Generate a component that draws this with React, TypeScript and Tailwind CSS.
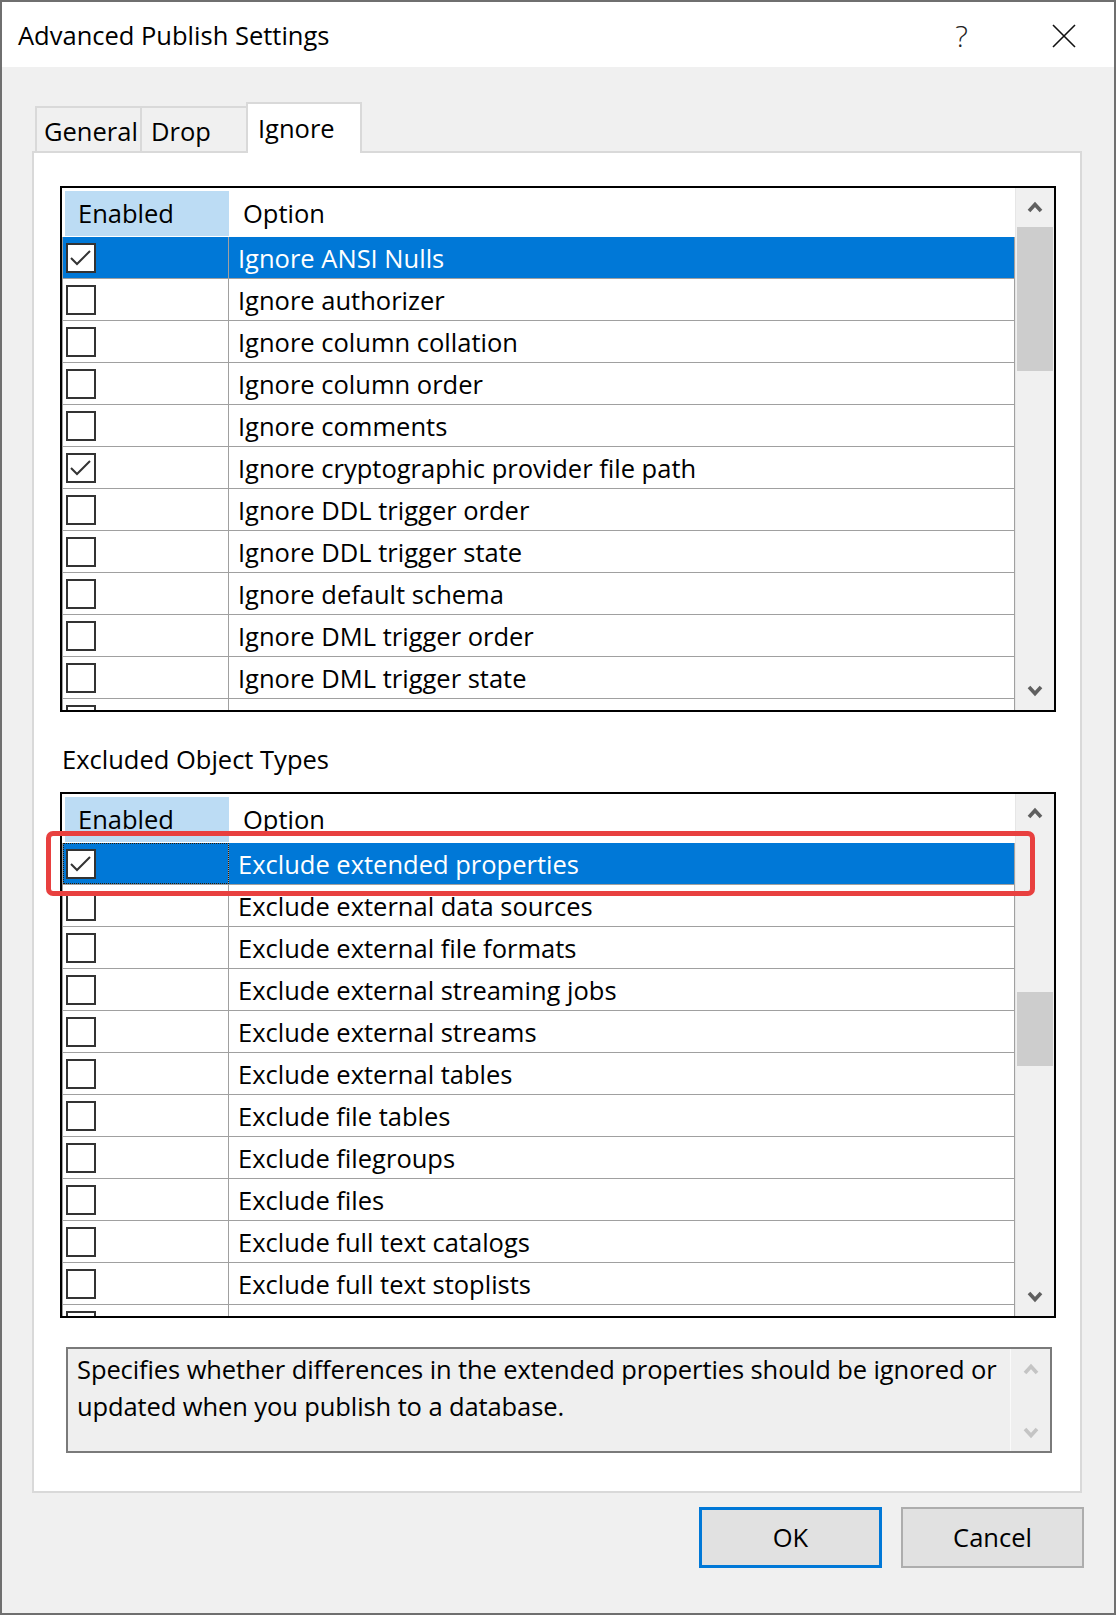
import React from "react";

type Row = { label: string; checked: boolean };

const ignoreRows: Row[] = [
  { label: "Ignore ANSI Nulls", checked: true },
  { label: "Ignore authorizer", checked: false },
  { label: "Ignore column collation", checked: false },
  { label: "Ignore column order", checked: false },
  { label: "Ignore comments", checked: false },
  { label: "Ignore cryptographic provider file path", checked: true },
  { label: "Ignore DDL trigger order", checked: false },
  { label: "Ignore DDL trigger state", checked: false },
  { label: "Ignore default schema", checked: false },
  { label: "Ignore DML trigger order", checked: false },
  { label: "Ignore DML trigger state", checked: false },
  { label: "Ignore file and log file path", checked: false },
];

const excludeRows: Row[] = [
  { label: "Exclude extended properties", checked: true },
  { label: "Exclude external data sources", checked: false },
  { label: "Exclude external file formats", checked: false },
  { label: "Exclude external streaming jobs", checked: false },
  { label: "Exclude external streams", checked: false },
  { label: "Exclude external tables", checked: false },
  { label: "Exclude file tables", checked: false },
  { label: "Exclude filegroups", checked: false },
  { label: "Exclude files", checked: false },
  { label: "Exclude full text catalogs", checked: false },
  { label: "Exclude full text stoplists", checked: false },
  { label: "Exclude linked server logins", checked: false },
];

function Chevron({ down, light }: { down?: boolean; light?: boolean }) {
  return (
    <svg width="16" height="13" viewBox="0 0 16 13">
      <polyline
        points={down ? "2,3 8,9.5 14,3" : "2,10 8,3.5 14,10"}
        fill="none"
        stroke={light ? "#c4c4c4" : "#606060"}
        strokeWidth="3.6"
      />
    </svg>
  );
}

function CheckBox({ checked }: { checked: boolean }) {
  return (
    <div className="ml-[3px] h-[30px] w-[30px] shrink-0 border-2 border-[#333333] bg-white">
      {checked && (
        <svg width="26" height="26" viewBox="0 0 26 26">
          <polyline points="3,13 9,19 22,6" fill="none" stroke="#333333" strokeWidth="2" />
        </svg>
      )}
    </div>
  );
}

function Grid({
  rows,
  focus,
  thumbClass,
}: {
  rows: Row[];
  focus?: boolean;
  thumbClass: string;
}) {
  return (
    <div className="flex h-[526px] w-[996px] shrink-0 border-2 border-black bg-white">
      <div className="flex w-[953px] flex-col overflow-hidden">
        <div className="flex h-[49px] shrink-0 pl-[3px] pt-[3px]">
          <div className="flex h-[45px] w-[164px] items-center bg-[#bcdcf4] pl-[13px]">Enabled</div>
          <div className="flex h-[45px] flex-1 items-center pl-[14px]">Option</div>
        </div>
        {rows.map((row, i) => {
          const selected = i === 0;
          return (
            <div
              key={row.label}
              className={
                "flex h-[42px] shrink-0 border-b border-l border-r border-[#a0a0a0] " +
                (selected ? "bg-[#0078d7] text-white" : "")
              }
            >
              <div
                className={
                  "flex w-[166px] shrink-0 items-center border-r border-[#a0a0a0] " +
                  (selected && focus ? "outline-1 -outline-offset-1 outline-dotted outline-[#2b1a05]" : "")
                }
              >
                <CheckBox checked={row.checked} />
              </div>
              <div className="flex flex-1 items-center whitespace-nowrap pl-[9px] pt-[2px]">{row.label}</div>
            </div>
          );
        })}
      </div>
      <div className="flex w-[39px] flex-col border-l border-[#e6e6e6] bg-[#f0f0f0]">
        <div className="flex h-[39px] shrink-0 items-center justify-center">
          <Chevron />
        </div>
        <div className="flex-1 px-[1px]">
          <div className={"bg-[#cdcdcd] " + thumbClass} />
        </div>
        <div className="flex h-[39px] shrink-0 items-center justify-center">
          <Chevron down />
        </div>
      </div>
    </div>
  );
}

export default function App() {
  return (
    <div className="flex h-[1615px] w-[1116px] flex-col border-2 border-[#6f6f6f] bg-[#f0f0f0] font-['Open_Sans','Noto_Sans',sans-serif] text-[25.5px] text-black">
      {/* title bar */}
      <div className="flex h-[65px] shrink-0 items-center bg-white pl-[16px] pt-[2px]">
        <span>Advanced Publish Settings</span>
        <span className="ml-auto text-[30px] font-light text-[#222]">?</span>
        <div className="ml-[84px] mr-[38px]">
          <svg width="24" height="24" viewBox="0 0 24 24">
            <path d="M1 1 L23 23 M23 1 L1 23" stroke="#111" strokeWidth="1.6" />
          </svg>
        </div>
      </div>

      {/* body */}
      <div className="flex flex-1 flex-col px-[30px] pt-[35px]">
        {/* tabs */}
        <div className="flex h-[49px] items-end pl-[3px]">
          <div className="flex h-[45px] w-[107px] items-center border-2 border-b-0 border-[#d9d9d9] bg-[#f0f0f0] pl-[7px] pt-[3px]">
            General
          </div>
          <div className="-ml-[2px] flex h-[45px] w-[108px] items-center border-2 border-b-0 border-[#d9d9d9] bg-[#f0f0f0] pl-[9px] pt-[3px]">
            Drop
          </div>
          <div className="relative z-10 -mb-[2px] -ml-[2px] flex h-[51px] w-[116px] items-center border-2 border-b-0 border-[#d9d9d9] bg-white pl-[10px]">
            Ignore
          </div>
        </div>

        {/* panel */}
        <div className="relative flex h-[1342px] w-[1050px] flex-col border-2 border-[#d9d9d9] bg-white pl-[26px] pt-[33px]">
          <Grid rows={ignoreRows} thumbClass="h-[144px]" />
          <div className="h-[80px] shrink-0 pl-[2px] pt-[31px] leading-[33px]">Excluded Object Types</div>
          <Grid rows={excludeRows} focus thumbClass="mt-[159px] h-[74px]" />

          <div className="ml-[6px] mt-[29px] flex h-[106px] w-[986px] border-2 border-[#7a7a7a] bg-[#efefef]">
            <div className="flex-1 overflow-hidden whitespace-nowrap pl-[9px] pt-[2px] leading-[37px] tracking-[-0.1px]">
              Specifies whether differences in the extended properties should be ignored or
              <br />
              updated when you publish to a database.
            </div>
            <div className="flex w-[40px] shrink-0 flex-col items-center justify-between border-l border-[#fafafa] pb-[12px] pt-[14px]">
              <Chevron light />
              <Chevron down light />
            </div>
          </div>

          {/* annotation highlight */}
          <div className="absolute left-[12px] top-[678px] h-[65px] w-[989px] rounded-[7px] border-[5px] border-[#e8403f]" />
        </div>

        {/* buttons */}
        <div className="flex justify-end gap-[19px] pt-[14px]">
          <button className="flex h-[61px] w-[183px] items-center justify-center border-[3px] border-[#0078d7] bg-[#e1e1e1]">
            OK
          </button>
          <button className="flex h-[61px] w-[183px] items-center justify-center border-2 border-[#adadad] bg-[#e1e1e1]">
            Cancel
          </button>
        </div>
      </div>
    </div>
  );
}
